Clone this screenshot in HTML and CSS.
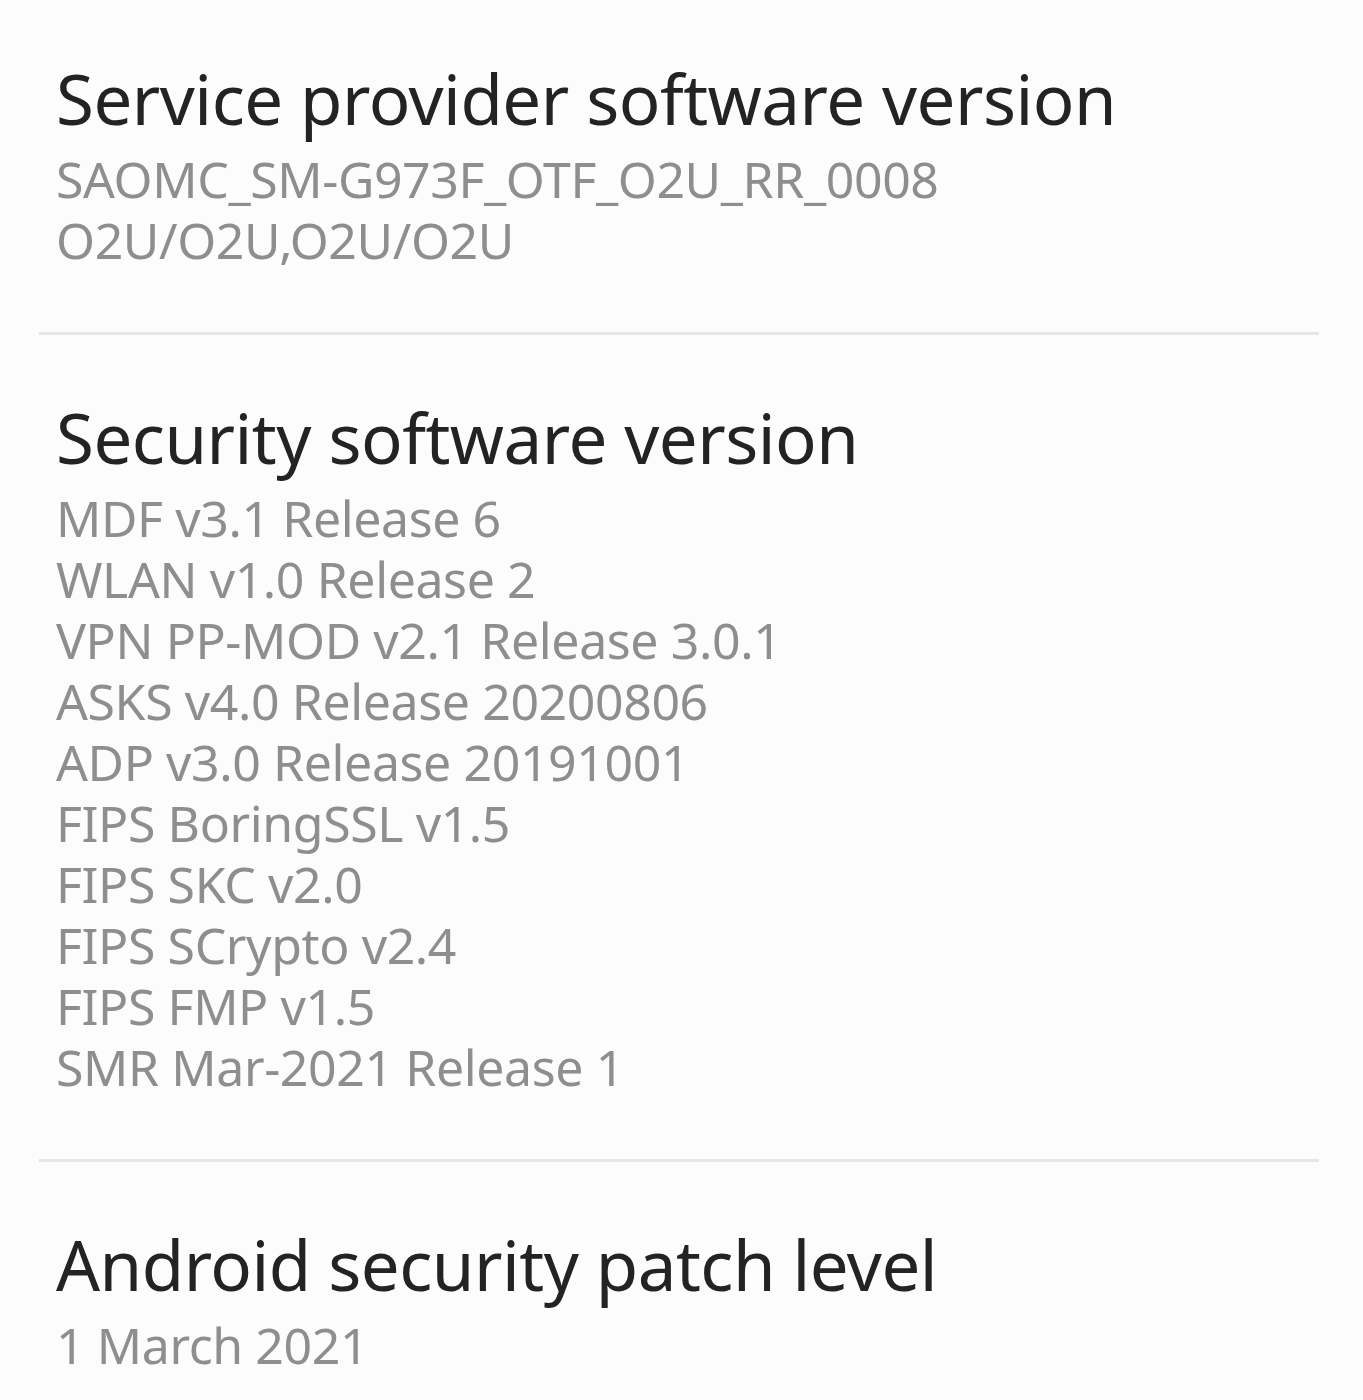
FILE: index.html
```html
<!DOCTYPE html>
<html>
<head>
<meta charset="utf-8">
<link rel="stylesheet" href="styles.css">
</head>
<body>
<div class="list">
  <div class="item first">
    <div class="title">Service provider software version</div>
    <div class="sub">SAOMC_SM-G973F_OTF_O2U_RR_0008</div>
    <div class="sub">O2U/O2U,O2U/O2U</div>
  </div>
  <div class="divider"></div>
  <div class="item">
    <div class="title">Security software version</div>
    <div class="sub">MDF v3.1 Release 6</div>
    <div class="sub">WLAN v1.0 Release 2</div>
    <div class="sub">VPN PP-MOD v2.1 Release 3.0.1</div>
    <div class="sub">ASKS v4.0 Release 20200806</div>
    <div class="sub">ADP v3.0 Release 20191001</div>
    <div class="sub">FIPS BoringSSL v1.5</div>
    <div class="sub">FIPS SKC v2.0</div>
    <div class="sub">FIPS SCrypto v2.4</div>
    <div class="sub">FIPS FMP v1.5</div>
    <div class="sub">SMR Mar-2021 Release 1</div>
  </div>
  <div class="divider"></div>
  <div class="item">
    <div class="title">Android security patch level</div>
    <div class="sub">1 March 2021</div>
  </div>
</div>
</body>
</html>
```
FILE: styles.css
```css
html, body {
  margin: 0;
  padding: 0;
  background: #fcfcfc;
}
body {
  font-family: "Noto Sans", "Open Sans", sans-serif;
  height: 1400px;
  overflow: hidden;
}
.list {
  padding: 0 44px 0 39px;
}
.item {
  padding: 62px 0 61px 17px;
}
.item.first {
  padding-top: 58px;
}
.title {
  font-size: 69px;
  line-height: 80px;
  color: #232323;
  letter-spacing: -0.5px;
  margin-bottom: 11px;
  white-space: nowrap;
}
.sub {
  font-size: 50px;
  line-height: 61px;
  color: #8e8e8e;
  letter-spacing: -0.4px;
  white-space: nowrap;
}
.divider {
  height: 3px;
  background: #e6e6e6;
}
```
